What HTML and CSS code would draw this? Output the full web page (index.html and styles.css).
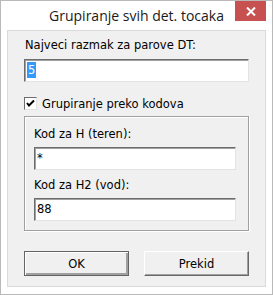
FILE: index.html
```html
<!DOCTYPE html>
<html lang="hr">
  <head>
    <meta charset="UTF-8" />
    <meta name="viewport" content="width=device-width, initial-scale=1.0" />
    <title>Grupiranje svih det. tocaka</title>
    <link rel="stylesheet" href="styles.css">
  </head>
  <body>
    <div class="window">
      <div class="titlebar">
        <span></span>
        <span class="title">Grupiranje svih det. tocaka</span>
        <span class="close">
          <svg width="10" height="9" viewBox="0 0 10 9">
            <path d="M1 0.5 L9 8.5 M9 0.5 L1 8.5" stroke="#fff" stroke-width="2" />
          </svg>
        </span>
      </div>
      <div class="client">
        <div class="label label-top">Najveci razmak za parove DT:</div>
        <div class="field field-wide"><span class="selected">5</span></div>
        <div class="check-row">
          <span class="checkbox">
            <svg width="11" height="11" viewBox="0 0 11 11">
              <path d="M2 5 L4 7.5 L9 2.5" fill="none" stroke="#000" stroke-width="2" />
            </svg>
          </span>
          <span class="check-label">Grupiranje preko kodova</span>
        </div>
        <div class="group">
          <div class="label">Kod za H (teren):</div>
          <div class="field">*</div>
          <div class="label">Kod za H2 (vod):</div>
          <div class="field">88</div>
        </div>
        <div class="buttons">
          <button class="btn btn-default">OK</button>
          <button class="btn">Prekid</button>
        </div>
      </div>
    </div>
  </body>
</html>
```

FILE: styles.css
```css
body {
  margin: 0;
  font-family: "DejaVu Sans", sans-serif;
  font-size: 11.5px;
  color: #000;
}

.window {
  width: 273px;
  height: 295px;
  box-sizing: border-box;
  border: 1px solid #b9b9b9;
  background-color: #fff;
  padding: 0 6px 7px;
  display: flex;
  flex-direction: column;
}

.titlebar {
  height: 29px;
  display: grid;
  grid-template-columns: 1fr auto 1fr;
  align-items: start;
}

.title {
  font-family: "Open Sans", sans-serif;
  font-size: 14px;
  line-height: 20px;
  margin-top: 5px;
  color: #1a1a1a;
}

.close {
  justify-self: end;
  width: 31px;
  height: 20px;
  background-color: #c75050;
  display: flex;
  align-items: center;
  justify-content: center;
}

.client {
  flex: 1;
  border: 1px solid #d9d9d9;
  background-color: #f0f0f0;
  padding: 0 16px;
  display: flex;
  flex-direction: column;
}

.label {
  line-height: 13px;
}

.label-top {
  margin-top: 8px;
  margin-bottom: 7px;
  padding-left: 1px;
}

.field {
  height: 23px;
  box-sizing: border-box;
  background-color: #fff;
  border-style: solid;
  border-width: 1px;
  border-color: #6d6d6d #e3e3e3 #e3e3e3 #6d6d6d;
  box-shadow: inset 1px 1px #a0a0a0;
  padding: 3px 0 0 2px;
  line-height: 15px;
}

.selected {
  background-color: #3399ff;
  color: #fff;
  padding: 1px 1px;
}

.check-row {
  display: flex;
  align-items: center;
  margin-top: 15px;
  height: 13px;
}

.checkbox {
  width: 13px;
  height: 13px;
  box-sizing: border-box;
  background-color: #fff;
  border-style: solid;
  border-width: 1px;
  border-color: #6d6d6d #e3e3e3 #e3e3e3 #6d6d6d;
  display: flex;
  align-items: center;
  justify-content: center;
}

.check-label {
  margin-left: 5px;
}

.group {
  margin-top: 6px;
  height: 115px;
  box-sizing: border-box;
  border: 1px solid #a0a0a0;
  box-shadow: 1px 1px #fff, inset 1px 1px #fff;
  padding: 11px 12px 0 9px;
  display: flex;
  flex-direction: column;
}

.group .label {
  margin-bottom: 6px;
}

.group .field + .label {
  margin-top: 9px;
}

.buttons {
  display: flex;
  justify-content: space-between;
  margin-top: 20px;
}

.btn {
  width: 105px;
  height: 25px;
  font-family: "DejaVu Sans", sans-serif;
  font-size: 11.5px;
  color: #000;
  background-color: #f0f0f0;
  border-style: solid;
  border-width: 1px;
  border-color: #fff #696969 #696969 #fff;
  box-shadow: inset -1px -1px #a0a0a0;
  padding: 0;
}

.btn-default {
  border-color: #646464;
  box-shadow: inset 1px 1px #fff, inset -2px -2px #a0a0a0;
}
```
